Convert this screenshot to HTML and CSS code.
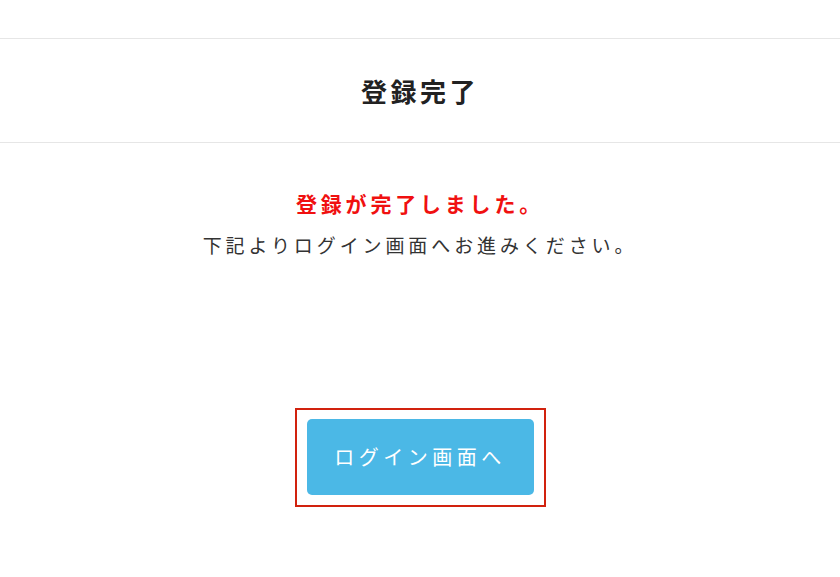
FILE: index.html
```html
<!DOCTYPE html>
<html lang="ja">
<head>
  <meta charset="utf-8">
  <title>登録完了</title>
  <link rel="stylesheet" href="styles.css">
</head>
<body>
  <div class="top-space"></div>

  <div class="title-bar">
    <h1>登録完了</h1>
  </div>

  <div id="content">
    <p class="done">登録が完了しました。</p>
    <p class="note">下記よりログイン画面へお進みください。</p>

    <div class="button-frame">
      <a class="login-button" href="#">ログイン画面へ</a>
    </div>
  </div>
</body>
</html>
```

FILE: styles.css
```css
body {
  margin: 0;
  background-color: #fff;
  font-family: "Noto Sans CJK JP", "Noto Sans", sans-serif;
  color: #333;
}

.top-space {
  height: 38px;
}

.title-bar {
  display: flex;
  justify-content: center;
  align-items: center;
  height: 103px;
  border-top: 1px solid #e6e6e6;
  border-bottom: 1px solid #e6e6e6;
}

h1 {
  margin: 0;
  font-size: 26px;
  font-weight: bold;
  letter-spacing: 3.5px;
  color: #222;
}

#content {
  text-align: center;
  padding-top: 44px;
}

.done {
  margin: 0;
  font-size: 21px;
  line-height: 32px;
  font-weight: bold;
  letter-spacing: 3.8px;
  color: #f01010;
}

.note {
  margin: 12px 0 0;
  font-size: 19px;
  line-height: 28px;
  letter-spacing: 3.9px;
  color: #333;
}

.button-frame {
  display: inline-block;
  margin-top: 149px;
  padding: 9px 10px 10px;
  border: 2px solid #d1220e;
}

.login-button {
  display: block;
  width: 227px;
  height: 76px;
  line-height: 76px;
  border-radius: 5px;
  background-color: #4bb8e6;
  color: #fff;
  font-size: 20px;
  letter-spacing: 4.5px;
  text-decoration: none;
}
```
